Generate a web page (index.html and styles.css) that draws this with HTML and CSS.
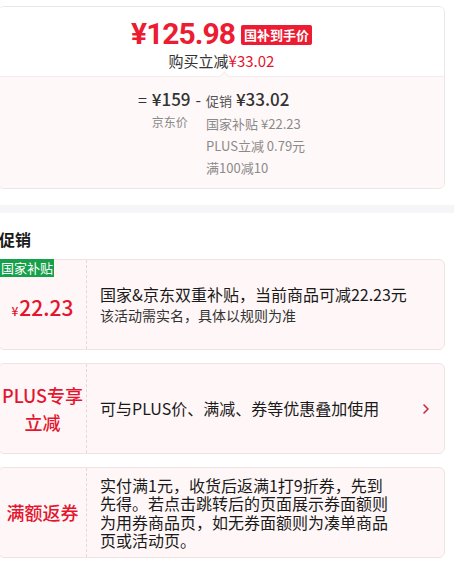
FILE: index.html
```html
<!DOCTYPE html>
<html lang="zh-CN">
<head>
    <meta charset="UTF-8">
    <meta name="viewport" content="width=device-width, initial-scale=1.0">
    <title>促销</title>
    <link rel="stylesheet" href="styles.css">
</head>
<body>
    <div class="page">
        <div class="summary">
            <div class="summary-top">
                <div class="final">
                    <span class="final-price">¥125.98</span>
                    <span class="badge">国补到手价</span>
                </div>
                <div class="save">购买立减<span class="red">¥33.02</span></div>
            </div>
            <div class="summary-bottom">
                <div class="calc">
                    <span class="op">=</span>
                    <div class="col">
                        <div class="amount">¥159</div>
                        <div class="note small">京东价</div>
                    </div>
                    <span class="op">-</span>
                    <div class="col">
                        <div class="amount"><span class="amount-label">促销</span> ¥33.02</div>
                        <div class="note">国家补贴 ¥22.23</div>
                        <div class="note">PLUS立减 0.79元</div>
                        <div class="note">满100减10</div>
                    </div>
                </div>
            </div>
        </div>
    </div>

    <div class="band"></div>

    <div class="page">
        <h2 class="title">促销</h2>

        <div class="promo">
            <span class="tag">国家补贴</span>
            <div class="promo-left">
                <span class="promo-price"><span class="promo-yen">¥</span>22.23</span>
            </div>
            <div class="promo-desc nowrap">
                <p class="main">国家&amp;京东双重补贴，当前商品可减22.23元</p>
                <p class="sub">该活动需实名，具体以规则为准</p>
            </div>
        </div>

        <div class="promo">
            <div class="promo-left">
                <span class="promo-name">PLUS专享<br>立减</span>
            </div>
            <div class="promo-desc">
                <p class="main">可与PLUS价、满减、券等优惠叠加使用</p>
            </div>
            <svg class="arrow" width="8" height="12" viewBox="0 0 8 12">
                <polyline points="2,2 6,6 2,10" fill="none" stroke="#c8283e" stroke-width="1.6" stroke-linecap="round" stroke-linejoin="round"/>
            </svg>
        </div>

        <div class="promo">
            <div class="promo-left">
                <span class="promo-name">满额返券</span>
            </div>
            <div class="promo-desc narrow">
                <p class="main tight">实付满1元，收货后返满1打9折券，先到先得。若点击跳转后的页面展示券面额则为用券商品页，如无券面额则为凑单商品页或活动页。</p>
            </div>
        </div>
    </div>
</body>
</html>
```

FILE: styles.css
```css
* {
    margin: 0;
    padding: 0;
    box-sizing: border-box;
}

body {
    font-family: "Noto Sans CJK SC", "Noto Sans", sans-serif;
    background: #fff;
    color: #1a1a1a;
    width: 454px;
    overflow: hidden;
}

.page {
    margin-left: -2px;
    width: 447px;
}

/* 到手价卡片 */
.summary {
    margin-top: 6px;
    border: 1px solid #ece6e8;
    border-radius: 6px;
    overflow: hidden;
}

.summary-top {
    background: #fff;
    padding: 10px 0 5px;
    text-align: center;
}

.final {
    display: flex;
    justify-content: center;
    align-items: center;
    gap: 6px;
    height: 34px;
}

.final-price {
    font-family: Roboto, "Noto Sans CJK SC", sans-serif;
    font-size: 30px;
    font-weight: 700;
    color: #ec1c33;
    letter-spacing: -1px;
    line-height: 34px;
}

.badge {
    background: #ec1c33;
    color: #fff;
    font-size: 13px;
    font-weight: 700;
    line-height: 20px;
    padding: 0 3px;
    border-radius: 2px;
    margin-top: 2px;
}

.save {
    font-size: 15px;
    line-height: 20px;
    color: #333;
}

.red {
    color: #e4162f;
}

.summary-bottom {
    position: relative;
    background: #fff8f8;
    border-top: 1px solid #f3ecee;
    padding: 10px 0 9px;
}

.summary-bottom::before {
    content: "";
    position: absolute;
    left: 222px;
    top: -4px;
    width: 6px;
    height: 6px;
    background: #fff8f8;
    border-top: 1px solid #f3ecee;
    border-left: 1px solid #f3ecee;
    transform: rotate(45deg);
}

.calc {
    display: flex;
    justify-content: center;
    gap: 5px;
}

.op {
    font-size: 16px;
    line-height: 24px;
    color: #333;
}

.amount {
    font-size: 17px;
    font-weight: 500;
    line-height: 24px;
    color: #333;
}

.amount-label {
    font-size: 13px;
    font-weight: 400;
    color: #555;
}

.note {
    font-size: 13px;
    line-height: 22px;
    color: #8a8a8a;
}

.note.small {
    font-size: 12px;
}

.band {
    height: 8px;
    margin-top: 16px;
    background: #f6f6f8;
}

/* 促销列表 */
.title {
    font-size: 16px;
    font-weight: 700;
    line-height: 22px;
    margin: 15px 0 9px;
    padding-left: 1px;
    color: #1a1a1a;
}

.promo {
    position: relative;
    display: flex;
    align-items: stretch;
    min-height: 91px;
    background: #fff7f7;
    border: 1px solid #f1e3e5;
    border-radius: 6px;
    margin-bottom: 13px;
}

.tag {
    position: absolute;
    left: 1px;
    top: -1px;
    background: #16a04a;
    color: #fff;
    font-size: 13px;
    line-height: 18px;
    padding: 0 1px;
}

.promo-left {
    width: 88px;
    flex-shrink: 0;
    display: flex;
    align-items: center;
    justify-content: center;
    border-right: 1px dashed #e8d6d8;
    text-align: center;
}

.promo-price {
    font-size: 21px;
    font-weight: 500;
    color: #e4162f;
    margin-top: 4px;
}

.promo-yen {
    font-size: 12px;
    margin-right: 1px;
}

.promo-name {
    font-size: 18px;
    font-weight: 500;
    line-height: 27px;
    color: #e4162f;
}

.promo-desc {
    flex: 1;
    display: flex;
    flex-direction: column;
    justify-content: center;
    padding-left: 13px;
    color: #1a1a1a;
}

.nowrap {
    white-space: nowrap;
}

.narrow {
    flex: none;
    width: 305px;
}

.main {
    font-size: 16px;
    line-height: 21px;
}

.main.tight {
    line-height: 18.5px;
}

.sub {
    font-size: 14px;
    line-height: 20px;
    color: #333;
}

.arrow {
    align-self: center;
    margin-right: 14px;
}
```
